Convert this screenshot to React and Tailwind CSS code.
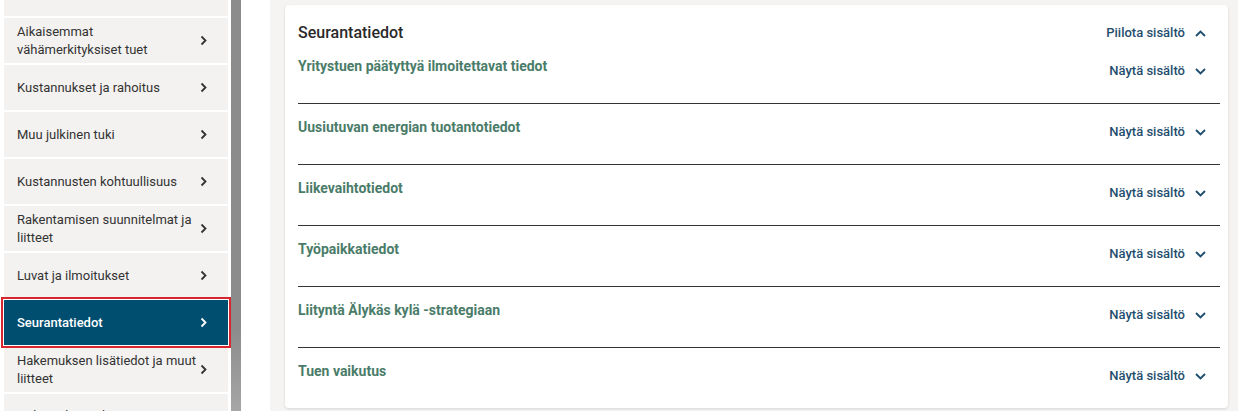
import React from "react";

const navItems = [
  { label: "", partial: true },
  { label: "Aikaisemmat vähämerkityksiset tuet" },
  { label: "Kustannukset ja rahoitus" },
  { label: "Muu julkinen tuki" },
  { label: "Kustannusten kohtuullisuus" },
  { label: "Rakentamisen suunnitelmat ja liitteet" },
  { label: "Luvat ja ilmoitukset" },
  { label: "Seurantatiedot", active: true },
  { label: "Hakemuksen lisätiedot ja muut liitteet" },
  { label: "Hakemuksen yhteenveto", last: true },
];

const sections = [
  "Yritystuen päätyttyä ilmoitettavat tiedot",
  "Uusiutuvan energian tuotantotiedot",
  "Liikevaihtotiedot",
  "Työpaikkatiedot",
  "Liityntä Älykäs kylä -strategiaan",
  "Tuen vaikutus",
];

const ChevronRight = ({ className }) => (
  <svg width="8" height="11" viewBox="0 0 8 11" className={`shrink-0 ${className || ""}`} fill="none">
    <path d="M1.5 1.5l4 4-4 4" stroke="currentColor" strokeWidth="1.8" />
  </svg>
);

const Chevron = ({ up }) => (
  <svg width="11" height="7" viewBox="0 0 11 7" fill="none" className="shrink-0">
    <path
      d={up ? "M1 6l4.5-4.5L10 6" : "M1 1l4.5 4.5L10 1"}
      stroke="currentColor"
      strokeWidth="1.9"
    />
  </svg>
);

const NavItem = ({ item }) => {
  if (item.active) {
    return (
      <div className="relative h-[45px] shrink-0 flex items-center justify-between pl-[13px] pr-[20px] bg-[#004e6f] text-white font-medium outline-2 outline-[#d7262e] outline-offset-1">
        <span>{item.label}</span>
        <ChevronRight />
      </div>
    );
  }
  if (item.last) {
    return (
      <div className="h-[45px] shrink-0 flex items-start pt-[13px] pl-[13px] pr-[20px] bg-[#f3f2f0] text-[#333]">
        <span>{item.label}</span>
      </div>
    );
  }
  return (
    <div className="h-[45px] shrink-0 flex items-center justify-between pl-[13px] pr-[20px] bg-[#f3f2f0] text-[#333]">
      <span className="max-w-[184px]">{item.label}</span>
      {!item.partial && <ChevronRight className="text-[#333]" />}
    </div>
  );
};

const Section = ({ title, first }) => (
  <div
    className={`flex justify-between mr-[8px] ${
      first ? "h-[60px] -mt-[2px]" : "h-[61px] border-t border-[#333]"
    }`}
  >
    <div className="pt-[13px] text-[14px] leading-[20px] font-bold text-[#4a7c69]">
      {title}
    </div>
    <button className="mt-[18px] h-[20px] flex items-center gap-[10px] pr-[14px] text-[13px] font-medium text-[#1f4e6e]">
      Näytä sisältö
      <Chevron />
    </button>
  </div>
);

export default function App() {
  return (
    <div
      className="flex h-[411px] w-[1238px] overflow-hidden bg-white"
      style={{ fontFamily: "Roboto, 'Liberation Sans', sans-serif" }}
    >
      {/* Side navigation */}
      <aside className="w-[231px] shrink-0 bg-white">
        <nav className="-mt-[29px] flex flex-col gap-[2px] pl-[4px] pr-[3px] text-[13px] leading-[18px]">
          {navItems.map((item, idx) => (
            <NavItem key={idx} item={item} />
          ))}
        </nav>
      </aside>

      {/* Scroll track */}
      <div className="w-[10px] shrink-0 bg-gradient-to-b from-[#8c8c8c] from-80% to-[#a6a6a6]" />
      <div className="w-[29px] shrink-0 bg-white" />

      {/* Main content */}
      <main className="flex-1 bg-[#f5f4f2] pl-[15px] pr-[10px] pt-[5px]">
        <div className="bg-white rounded-[4px] shadow-[0_1px_3px_rgba(0,0,0,0.12)] pl-[13px] pt-[16px]">
          <div className="flex items-center justify-between h-[24px] mr-[8px]">
            <h2 className="text-[16px] font-medium text-[#2a2a2a]">Seurantatiedot</h2>
            <button className="flex items-center gap-[10px] pr-[14px] text-[13px] font-medium text-[#1f4e6e]">
              Piilota sisältö
              <Chevron up />
            </button>
          </div>
          {sections.map((s, idx) => (
            <Section key={s} title={s} first={idx === 0} />
          ))}
        </div>
      </main>
    </div>
  );
}
